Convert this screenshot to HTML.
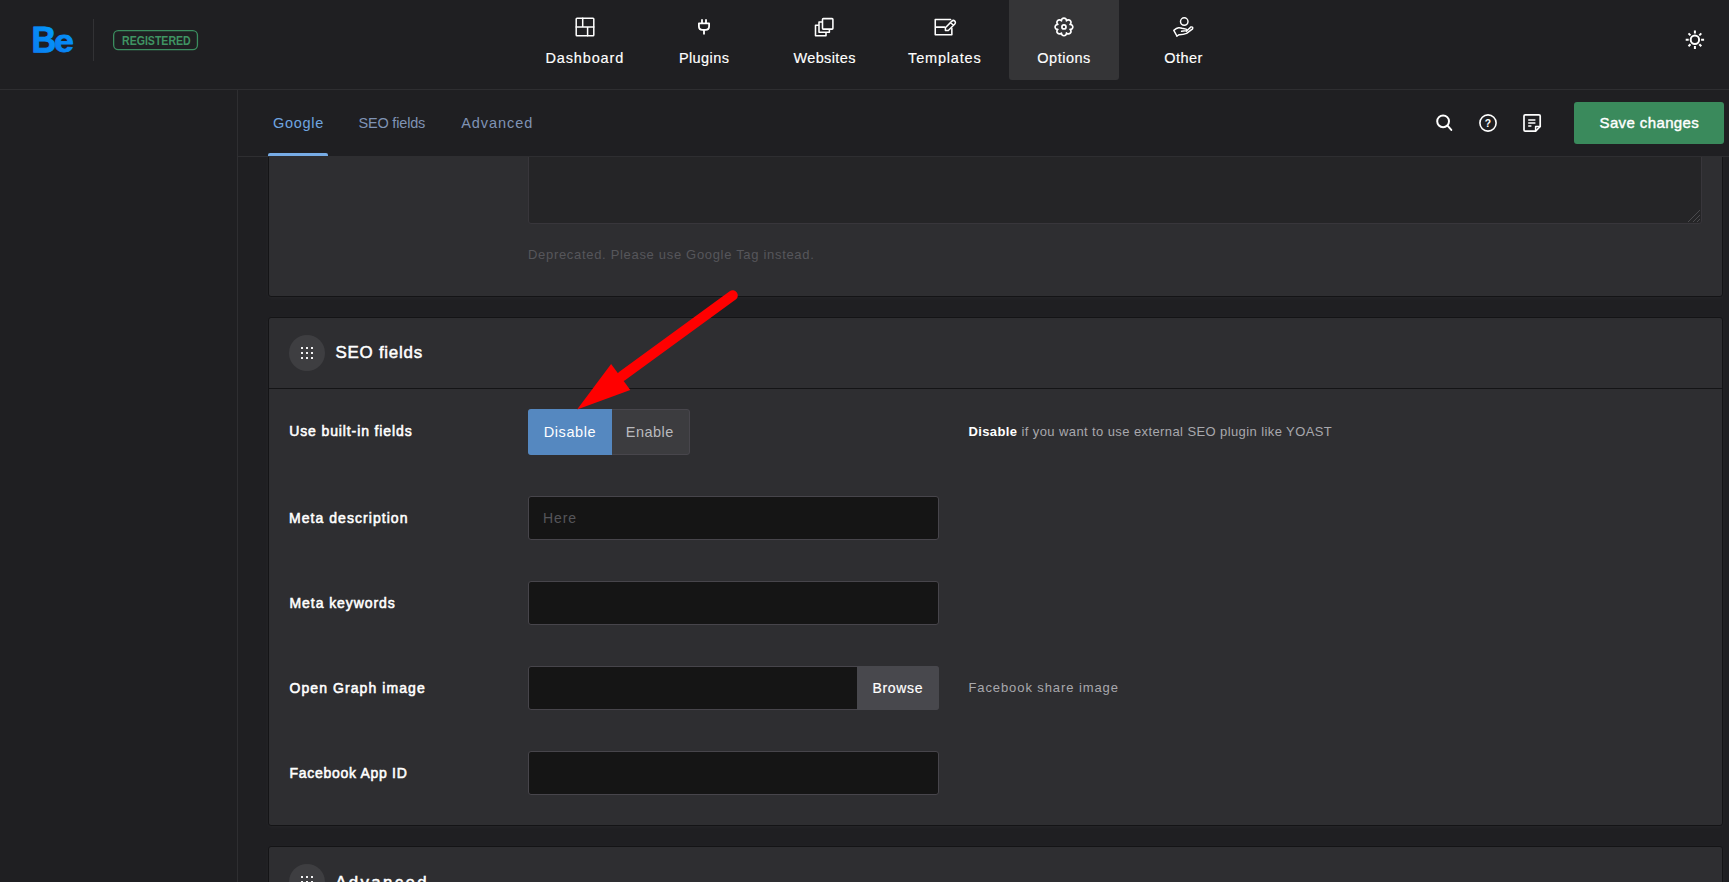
<!DOCTYPE html>
<html lang="en">
<head>
<meta charset="utf-8">
<title>Be Options - SEO</title>
<style>
html,body{margin:0;padding:0;}
body{width:1729px;height:882px;overflow:hidden;background:#1f1f22;font-family:"Liberation Sans",sans-serif;color:#fff;position:relative;}
.abs{position:absolute;}
.t{position:absolute;white-space:nowrap;line-height:1;transform-origin:0 0;}
/* header */
#header{left:0;top:0;width:1729px;height:89px;background:#1f1f22;border-bottom:1px solid #2e2e31;}
#sidebar{left:0;top:90px;width:237px;height:792px;background:#1f1f22;border-right:1px solid #2e2e31;}
#toolbar{left:238px;top:90px;width:1491px;height:66px;background:#1f1f22;border-bottom:1px solid #2e2e31;}
#sep{left:93px;top:19px;width:1px;height:42px;background:#323235;}
#badge{left:113px;top:30px;width:83px;height:18px;border:1px solid #3b8c5e;border-radius:5px;}
#navactive{left:1009px;top:0;width:110px;height:80px;background:#353537;border-radius:0 0 3px 3px;}
.nav{color:#fff;font-size:15px;font-weight:400;-webkit-text-stroke:0.15px #fff;}
.tab{font-size:15px;color:#7f93b5;}
/* cards */
.card{position:absolute;left:268px;width:1453px;background:#2e2e31;border:1px solid #141416;border-radius:3px;box-shadow:0 1px 4px rgba(255,255,255,.035);}
.chead{position:absolute;left:0;top:0;width:100%;height:70px;border-bottom:1px solid #141416;}
.circ{position:absolute;width:36px;height:36px;border-radius:50%;background:#3e3e41;}
.lbl{font-weight:400;color:#fff;-webkit-text-stroke:0.55px #fff;}
.inp{position:absolute;background:#151515;border:1px solid #47454b;border-radius:3px;box-sizing:border-box;}
.desc{font-size:13px;color:#a8a8ad;}
#t_reg{left:121.60px;top:34.74px;font-size:12px;letter-spacing:0.000px;transform:scaleX(0.8808);}
#t_n1{left:545.50px;top:50.73px;font-size:14.5px;letter-spacing:0.846px;}
#t_n2{left:678.88px;top:50.73px;font-size:14.5px;letter-spacing:0.420px;}
#t_n3{left:793.40px;top:50.73px;font-size:14.5px;letter-spacing:0.386px;}
#t_n4{left:908.12px;top:50.73px;font-size:14.5px;letter-spacing:0.816px;}
#t_n5{left:1037.34px;top:50.73px;font-size:14.5px;letter-spacing:0.510px;}
#t_n6{left:1164.34px;top:50.73px;font-size:14.5px;letter-spacing:0.421px;}
#t_tab1{left:273.00px;top:115.63px;font-size:14.5px;letter-spacing:0.720px;}
#t_tab2{left:358.44px;top:115.63px;font-size:14.5px;letter-spacing:-0.180px;}
#t_tab3{left:461.28px;top:115.63px;font-size:14.5px;letter-spacing:0.926px;}
#t_save{left:1599.50px;top:115.30px;font-size:15px;letter-spacing:0.386px;}
#t_dep{left:528.02px;top:248.20px;font-size:13px;letter-spacing:0.683px;}
#t_seotitle{left:335.50px;top:345.49px;font-size:16.9px;letter-spacing:0.760px;}
#t_l1{left:289.24px;top:423.65px;font-size:14px;letter-spacing:0.880px;}
#t_dis{left:543.81px;top:424.73px;font-size:14.5px;letter-spacing:0.556px;}
#t_en{left:625.82px;top:424.73px;font-size:14.5px;letter-spacing:0.468px;}
#t_d1{left:968.44px;top:425.30px;font-size:13px;letter-spacing:0.401px;}
#t_l2{left:289.06px;top:511.25px;font-size:14px;letter-spacing:1.044px;}
#t_here{left:543.04px;top:511.25px;font-size:14px;letter-spacing:0.900px;}
#t_l3{left:289.50px;top:596.25px;font-size:14px;letter-spacing:0.932px;}
#t_l4{left:289.48px;top:681.25px;font-size:14px;letter-spacing:1.080px;}
#t_browse{left:872.50px;top:681.25px;font-size:14px;letter-spacing:0.648px;}
#t_d4{left:968.44px;top:681.00px;font-size:13px;letter-spacing:0.907px;}
#t_l5{left:289.50px;top:766.25px;font-size:14px;letter-spacing:0.703px;}
#t_advtitle{left:335.30px;top:874.59px;font-size:16.9px;letter-spacing:2.300px;}
</style>
</head>
<body>

<!-- content cards -->
<div class="card" id="card1" style="top:100px;height:195px;"></div>
<div class="inp" id="ta" style="left:528px;top:100px;width:1174px;height:124px;background:#252527;border-color:#38363b;"></div>
<svg class="abs" style="left:1686px;top:208px" width="15" height="15" viewBox="0 0 15 15"><path d="M14 2 L2 14 M14 7 L7 14 M14 11 L11 14" stroke="#4a4a4d" stroke-width="1" fill="none"/></svg>
<div class="t" id="t_dep" style="color:#56565b;">Deprecated. Please use Google Tag instead.</div>

<div class="card" id="card2" style="top:317px;height:507px;">
  <div class="chead"></div>
</div>
<div class="circ" style="left:289px;top:335px;"></div>
<svg class="abs" style="left:300px;top:346px" width="14" height="14" viewBox="0 0 14 14" fill="#f2f2f3" shape-rendering="crispEdges">
  <rect x="1" y="1" width="2" height="2"/><rect x="6" y="1" width="2" height="2"/><rect x="11" y="1" width="2" height="2"/>
  <rect x="1" y="6" width="2" height="2"/><rect x="6" y="6" width="2" height="2"/><rect x="11" y="6" width="2" height="2"/>
  <rect x="1" y="11" width="2" height="2"/><rect x="6" y="11" width="2" height="2"/><rect x="11" y="11" width="2" height="2"/>
</svg>
<div class="t" id="t_seotitle" style="color:#fff;-webkit-text-stroke:0.5px #fff;">SEO fields</div>

<!-- row 1 -->
<div class="t lbl" id="t_l1">Use built-in fields</div>
<div class="abs" id="seg" style="left:528px;top:409px;width:162px;height:46px;box-sizing:border-box;background:#3c3c3f;border:1px solid #48464c;border-radius:3px;"></div>
<div class="abs" id="segon" style="left:528px;top:409px;width:84px;height:46px;background:#5588c0;border-radius:3px 0 0 3px;"></div>
<div class="t" id="t_dis" style="color:#fff;">Disable</div>
<div class="t" id="t_en" style="color:#b9b9bd;">Enable</div>
<div class="t desc" id="t_d1"><b style="color:#fff">Disable</b> if you want to use external SEO plugin like YOAST</div>

<!-- row 2 -->
<div class="t lbl" id="t_l2">Meta description</div>
<div class="inp" style="left:528px;top:496px;width:411px;height:44px;"></div>
<div class="t" id="t_here" style="color:#55555a;">Here</div>

<!-- row 3 -->
<div class="t lbl" id="t_l3">Meta keywords</div>
<div class="inp" style="left:528px;top:581px;width:411px;height:44px;"></div>

<!-- row 4 -->
<div class="t lbl" id="t_l4">Open Graph image</div>
<div class="inp" style="left:528px;top:666px;width:411px;height:44px;"></div>
<div class="abs" id="browse" style="left:857px;top:666px;width:82px;height:44px;background:#48484d;border-radius:0 3px 3px 0;"></div>
<div class="t" id="t_browse" style="color:#fff;-webkit-text-stroke:0.2px #fff;">Browse</div>
<div class="t desc" id="t_d4">Facebook share image</div>

<!-- row 5 -->
<div class="t lbl" id="t_l5">Facebook App ID</div>
<div class="inp" style="left:528px;top:751px;width:411px;height:44px;"></div>

<!-- card 3 -->
<div class="card" id="card3" style="top:846px;height:100px;"></div>
<div class="circ" style="left:289px;top:864px;"></div>
<svg class="abs" style="left:300px;top:875px" width="14" height="14" viewBox="0 0 14 14" fill="#f2f2f3" shape-rendering="crispEdges">
  <rect x="1" y="1" width="2" height="2"/><rect x="6" y="1" width="2" height="2"/><rect x="11" y="1" width="2" height="2"/>
  <rect x="1" y="6" width="2" height="2"/><rect x="6" y="6" width="2" height="2"/><rect x="11" y="6" width="2" height="2"/>
</svg>
<div class="t" id="t_advtitle" style="color:#fff;-webkit-text-stroke:0.5px #fff;">Advanced</div>

<!-- red arrow -->
<svg class="abs" style="left:560px;top:280px" width="200" height="140" viewBox="560 280 200 140">
  <line x1="732.7" y1="295.4" x2="622" y2="376.2" stroke="#ff0000" stroke-width="10.2" stroke-linecap="round"/>
  <polygon points="577.1,409.4 611.1,364.1 630.3,390" fill="#ff0000"/>
</svg>

<!-- chrome -->
<div class="abs" id="sidebar"></div>
<div class="abs" id="toolbar"></div>
<div class="abs" id="header"></div>
<div class="abs" id="navactive"></div>

<!-- icons -->
<svg class="abs" id="icons" style="left:0;top:0" width="1729" height="160" viewBox="0 0 1729 160" fill="none" stroke="#fff" stroke-linecap="round" stroke-linejoin="round">
  <rect x="113.65" y="30.55" width="83.8" height="19.1" rx="4.6" stroke="#3b8d5f" stroke-width="1.3"/>
  <!-- dashboard -->
  <g stroke-width="1.5">
    <rect x="576.2" y="18.2" width="17.6" height="17.6" rx="0.8"/>
    <path d="M576.2 27 H593.8 M582.7 18.2 V27 M587.6 27 V35.8"/>
  </g>
  <!-- plug -->
  <g stroke-width="1.8">
    <path d="M698.9 23.4 H709.1 V26.2 Q709.1 29.8 705.5 29.8 H702.5 Q698.9 29.8 698.9 26.2 Z"/>
    <path d="M702 19.3 V23 M706 19.3 V23 M704 30 V34.4" stroke-linecap="butt"/>
  </g>
  <!-- websites -->
  <g stroke-width="1.55">
    <rect x="822.5" y="18.6" width="10.4" height="10.5" rx="0.8"/>
    <path d="M821.8 21.9 H819 V32.2 H829.4 V29.8"/>
    <path d="M818.3 25.2 H815.5 V35.7 H826 V33"/>
  </g>
  <!-- templates -->
  <g stroke-width="1.55">
    <path d="M950.6 19.55 H935.25 V34.75 H951.85 V28.6 M935.25 27.1 H944.6"/>
    <path d="M945.4 27.7 V30.5 H948.3 L954.8 24 A2.05 2.05 0 0 0 951.9 21.1 Z M950.6 22.5 L953.3 25.2" stroke-width="1.5"/>
  </g>
  <!-- gear -->
  <g stroke-width="1.7">
    <path d="M1061.42,20.80 A2.54 2.54 0 1 1 1066.48,20.80 A2.54 2.54 0 1 1 1070.05,24.37 A2.54 2.54 0 1 1 1070.05,29.43 A2.54 2.54 0 1 1 1066.48,33.00 A2.54 2.54 0 1 1 1061.42,33.00 A2.54 2.54 0 1 1 1057.85,29.43 A2.54 2.54 0 1 1 1057.85,24.37 A2.54 2.54 0 1 1 1061.42,20.80 Z"/>
    <circle cx="1063.95" cy="26.9" r="2.05"/>
  </g>
  <!-- other -->
  <g stroke-width="1.45">
    <circle cx="1184.25" cy="21.55" r="3.75"/>
    <path d="M1176.9 36 L1173.8 30.4 Q1176.5 28.1 1178.6 27.8 Q1180 27.6 1182 28.3 L1186 29.1 Q1187.6 29.7 1186.4 30.6 L1181.6 31.3"/>
    <path d="M1186.3 31.2 L1191 26.9 Q1193.3 26.6 1192.6 28.9 L1186.6 33.4 Q1183 34.9 1178.8 34.8 L1176.9 36"/>
  </g>
  <!-- sun -->
  <g stroke-width="2">
    <circle cx="1694.9" cy="39.8" r="4.2"/>
    <path d="M1694.9 30.6 V33.6 M1694.9 46 V49 M1685.7 39.8 H1688.7 M1701.1 39.8 H1704.1 M1688.5 33.4 L1690.5 35.4 M1699.3 44.2 L1701.3 46.2 M1688.5 46.2 L1690.5 44.2 M1699.3 35.4 L1701.3 33.4" stroke-linecap="butt"/>
  </g>
  <!-- search -->
  <g stroke-width="2">
    <circle cx="1443.1" cy="121.3" r="5.9"/>
    <path d="M1447.5 125.7 L1451.3 129.9"/>
  </g>
  <!-- help -->
  <circle cx="1488" cy="123" r="8.1" stroke-width="1.6"/>
  <!-- notes -->
  <g stroke-width="1.7">
    <path d="M1540.2 126.5 V116 Q1540.2 114.8 1539 114.8 H1525.2 Q1524 114.8 1524 116 V129.9 Q1524 131.1 1525.2 131.1 H1535.6 Z"/>
    <path d="M1535.6 131.1 V126.5 H1540.2" stroke-width="1.5"/>
    <path d="M1528.2 120 H1535.4 M1528.2 123 H1535.4 M1528.2 126 H1531.4" stroke-linecap="butt" stroke-width="1.6"/>
  </g>
  <text x="1488" y="126.7" text-anchor="middle" font-family="Liberation Sans, sans-serif" font-weight="700" font-size="10.3" fill="#fff" stroke="none">?</text>
</svg>

<!-- logo -->
<svg class="abs" id="logo" style="left:0;top:0" width="100" height="80" viewBox="0 0 100 80" role="img" aria-label="Be"><title>Be</title>
  <defs><linearGradient id="lg" gradientUnits="userSpaceOnUse" x1="33" y1="53" x2="73" y2="26"><stop offset="0" stop-color="#0a7af0"/><stop offset="0.55" stop-color="#0590f8"/><stop offset="1" stop-color="#00b8ff"/></linearGradient></defs>
  <g id="t_be" font-family="Liberation Sans, sans-serif" font-weight="700" font-size="35.4" fill="url(#lg)" stroke="url(#lg)" stroke-width="0.9" stroke-linejoin="round">
    <text transform="translate(31.47,52.15) rotate(0.03) scale(0.9636,1.043)">B</text><text transform="translate(53.9,52.3) scale(1.0097,0.907)">e</text>
  </g>
</svg>
<div class="abs" id="sep"></div>
<div class="t" id="t_reg" style="font-weight:700;color:#3f9463;">REGISTERED</div>

<!-- nav labels -->
<div class="t nav" id="t_n1">Dashboard</div>
<div class="t nav" id="t_n2">Plugins</div>
<div class="t nav" id="t_n3">Websites</div>
<div class="t nav" id="t_n4">Templates</div>
<div class="t nav" id="t_n5">Options</div>
<div class="t nav" id="t_n6">Other</div>

<!-- tabs -->
<div class="t tab" id="t_tab1" style="color:#6fa5e0;">Google</div>
<div class="abs" id="tabline" style="left:268px;top:153px;width:60px;height:3px;background:#77ace6;border-radius:2px 2px 0 0;"></div>
<div class="t tab" id="t_tab2">SEO fields</div>
<div class="t tab" id="t_tab3">Advanced</div>

<!-- save -->
<div class="abs" id="save" style="left:1574px;top:102px;width:150px;height:42px;background:#3a8a5c;border-radius:3px;"></div>
<div class="t" id="t_save" style="color:#fff;-webkit-text-stroke:0.4px #fff;">Save changes</div>

</body>
</html>
